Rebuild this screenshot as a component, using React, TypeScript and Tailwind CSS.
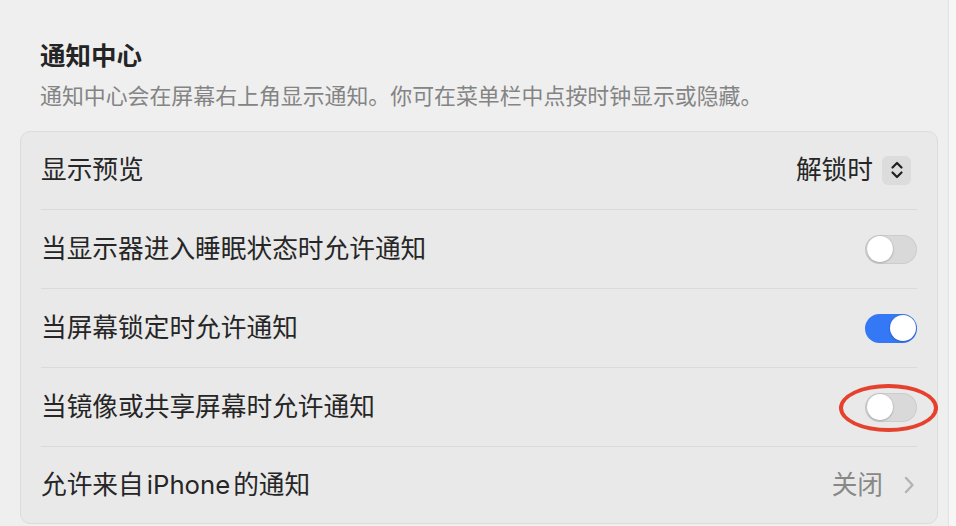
import React, { useState } from "react";

const font = {
  fontFamily: '"Inter", "Noto Sans CJK SC", "Noto Sans", sans-serif',
};

const Toggle = ({ on, onChange }: { on: boolean; onChange: () => void }) => (
  <button
    onClick={onChange}
    className={`relative h-[29px] w-[52px] rounded-full ${
      on ? "bg-[#3478f6]" : "bg-[#d9d9d9] shadow-[inset_0_0_0_1px_rgba(0,0,0,0.06)]"
    }`}
  >
    <span
      className={`absolute top-[1.5px] h-[26px] w-[26px] rounded-full bg-white shadow-[0_0.5px_2px_rgba(0,0,0,0.35)] ${
        on ? "left-[24.5px]" : "left-[1.5px]"
      }`}
    />
  </button>
);

const Row = ({
  label,
  children,
  last,
  height = "h-[79px]",
}: {
  label: React.ReactNode;
  children: React.ReactNode;
  last?: boolean;
  height?: string;
}) => (
  <div className="px-5">
    <div
      className={`flex ${height} items-center justify-between ${
        last ? "" : "border-b border-[#dadada]"
      }`}
    >
      <span className="text-[25.7px] text-[#262626]">{label}</span>
      <div className="flex items-center">{children}</div>
    </div>
  </div>
);

export default function App() {
  const [sleep, setSleep] = useState(false);
  const [locked, setLocked] = useState(true);
  const [mirror, setMirror] = useState(false);

  return (
    <div className="flex h-[526px] w-[956px] overflow-hidden bg-[#efefef]" style={font}>
      <div className="w-[948px] pl-5 pr-[10px]">
        <div className="px-5 pt-[40px]">
          <h2 className="text-[25.5px] font-bold leading-[32px] text-[#242424]">通知中心</h2>
          <p className="mt-[10px] text-[21.9px] leading-[28px] text-[#848484]">
            通知中心会在屏幕右上角显示通知。你可在菜单栏中点按时钟显示或隐藏。
          </p>
        </div>

        <div className="relative mt-[21px] rounded-[10px] border border-[#dcdcdc] bg-[#e9e9e9]">
          <Row label="显示预览" height="h-[78px]">
            <span className="mr-[9px] text-[25.7px] text-[#262626]">解锁时</span>
            <span className="mr-[6px] flex h-[29px] w-[29px] items-center justify-center rounded-[6px] bg-[#dcdcdc]">
              <svg width="14" height="20" viewBox="0 0 14 20" fill="none">
                <path
                  d="M2.5 7.5 L7 3 L11.5 7.5 M2.5 12.5 L7 17 L11.5 12.5"
                  stroke="#1f1f1f"
                  strokeWidth="2.2"
                  strokeLinecap="round"
                  strokeLinejoin="round"
                />
              </svg>
            </span>
          </Row>
          <Row label="当显示器进入睡眠状态时允许通知">
            <Toggle on={sleep} onChange={() => setSleep((p) => !p)} />
          </Row>
          <Row label="当屏幕锁定时允许通知">
            <Toggle on={locked} onChange={() => setLocked((p) => !p)} />
          </Row>
          <Row label="当镜像或共享屏幕时允许通知">
            <Toggle on={mirror} onChange={() => setMirror((p) => !p)} />
          </Row>
          <Row
            label={
              <>
                允许来自<span className="mx-[3px]">iPhone</span>的通知
              </>
            }
            last
            height="h-[76px]"
          >
            <span className="mr-[20px] text-[25.7px] text-[#888888]">关闭</span>
            <svg width="12" height="20" viewBox="0 0 12 20" fill="none" className="mr-[2px]">
              <path
                d="M3 3 L9.5 10 L3 17"
                stroke="#b3b3b3"
                strokeWidth="2.4"
                strokeLinecap="round"
                strokeLinejoin="round"
              />
            </svg>
          </Row>

          {/* red highlight round the mirror toggle */}
          <div className="pointer-events-none absolute left-[818px] top-[252px] h-[48px] w-[99px] rounded-[50%] border-[4px] border-[#e5412d]" />
        </div>
      </div>
      <div className="h-full w-[8px] border-l border-[#e2e2e2] bg-[#f6f6f6]" />
    </div>
  );
}
